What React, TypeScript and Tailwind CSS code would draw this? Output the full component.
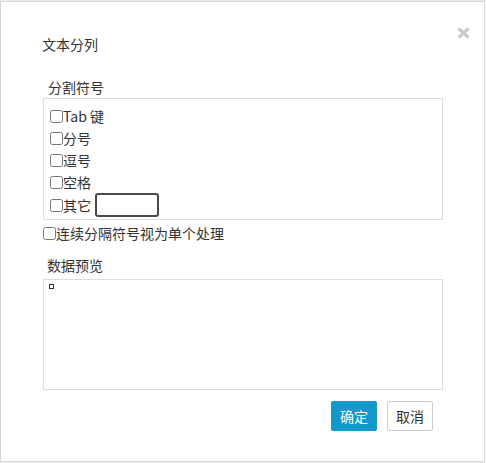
import React from "react";

const Row = ({ label, children, h = "h-[22px]" }: { label: string; children?: React.ReactNode; h?: string }) => (
  <div className={`flex items-center ${h}`}>
    <input type="checkbox" className="m-0 w-[13px] h-[13px] shrink-0" />
    <span className="leading-5">{label}</span>
    {children}
  </div>
);

export default function App() {
  return (
    <div
      className="w-[486px] h-[463px] bg-white text-[14px] text-[#333]"
      style={{ fontFamily: '"Noto Sans CJK SC", "Noto Sans", sans-serif' }}
    >
      <div className="h-px bg-[#ececec]" />
      <div className="relative w-[485px] h-[461px] border border-[#d6d6d6] bg-white shadow-[0_1px_1px_rgba(0,0,0,0.08)]">
        <div className="absolute left-[456px] top-[25px]">
          <svg width="13" height="12" viewBox="0 0 13 12">
            <path d="M1.5 1.5 L11.5 10.5 M11.5 1.5 L1.5 10.5" stroke="#cbcbcb" strokeWidth="3.2" strokeLinecap="butt" />
          </svg>
        </div>
        <div className="pt-[32px] pl-[42px] flex flex-col">
          <div className="leading-5 ml-[-1px]">文本分列</div>
          <div className="mt-[23px] pl-[5px] leading-5">分割符号</div>
          <div className="mt-[1px] w-[400px] h-[122px] border border-[#dddddd] pt-[6px] pl-[6px]">
            <Row label="Tab 键" />
            <Row label="分号" />
            <Row label="逗号" />
            <Row label="空格" />
            <Row label="其它" h="h-[24px]">
              <input
                type="text"
                className="ml-[4px] w-[64px] h-[24px] border-2 border-[#4a4a4a] rounded-[3px] bg-white outline-none"
              />
            </Row>
          </div>
          <div className="mt-[2px]">
            <Row label="连续分隔符号视为单个处理" />
          </div>
          <div className="mt-[11px] pl-[4px] leading-5">数据预览</div>
          <div className="mt-[4px] w-[400px] h-[111px] border border-[#dddddd]">
            <div className="ml-[5px] mt-[4px] w-[5px] h-[5px] border border-[#333]" />
          </div>
          <div className="mt-[11px] w-[400px] pr-[10px] flex justify-end gap-[10px]">
            <button className="w-[46px] h-[30px] rounded-[2px] bg-[#0f9acb] text-white leading-5">确定</button>
            <button className="w-[46px] h-[30px] rounded-[2px] border border-[#cccccc] bg-white text-[#333] leading-5">取消</button>
          </div>
        </div>
      </div>
    </div>
  );
}
